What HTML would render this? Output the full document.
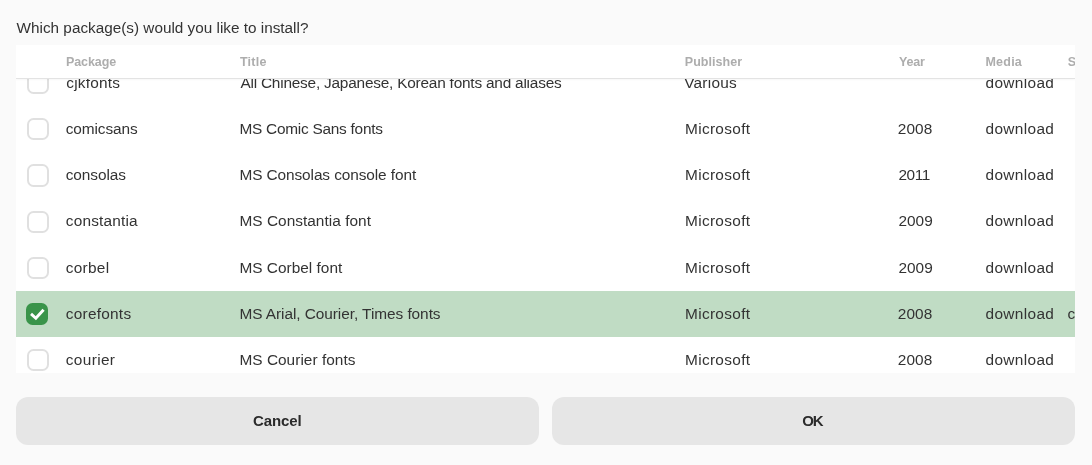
<!DOCTYPE html>
<html><head><meta charset="utf-8">
<style>
html,body{margin:0;padding:0;}
body{width:1092px;height:465px;background:#fafafa;overflow:hidden;font-family:"Liberation Sans",sans-serif;color:#333333;}
#wrap{position:absolute;left:0;top:0;width:1092px;height:465px;background:#fafafa;will-change:transform;}
.t{position:absolute;white-space:pre;line-height:1;}
#list{position:absolute;left:16px;top:45px;width:1059px;height:328px;background:#fff;overflow:hidden;}
#hdr{position:absolute;left:0;top:0;width:100%;height:33px;background:#fff;z-index:2;border-bottom:1px solid #e3e3e3;box-shadow:0 1px 2px rgba(0,0,0,0.035);}
.h{position:absolute;font-size:12.5px;font-weight:700;color:#adadad;white-space:pre;line-height:1;}
.row{position:absolute;left:0;width:100%;height:46.2px;}
.row.sel{background:#c0dcc4;}
.c{position:absolute;white-space:pre;font-size:15.4px;line-height:1;}
.cb{position:absolute;box-sizing:border-box;width:22.1px;height:22.1px;border:2px solid #e0e0e0;border-radius:6.5px;}
.cb.on{background:#3a944a;border-color:#3a944a;}
.btn{position:absolute;top:397px;height:48px;background:#e6e6e6;border-radius:12px;}
.b{position:absolute;font-size:15px;font-weight:700;line-height:1;color:#2b2b2b;white-space:pre;}
</style></head><body><div id="wrap">
<span class="t" style="left:16.60px;top:20.15px;letter-spacing:0.005px;font-size:15.3px">Which package(s) would you like to install?</span>
<div id="list">
<div id="hdr">
<span class="h" style="left:49.95px;top:11.12px;letter-spacing:-0.091px">Package</span>
<span class="h" style="left:223.90px;top:11.12px;letter-spacing:0.246px">Title</span>
<span class="h" style="left:668.75px;top:11.12px;letter-spacing:0.046px">Publisher</span>
<span class="h" style="left:882.99px;top:11.12px;letter-spacing:-0.158px">Year</span>
<span class="h" style="left:969.42px;top:11.12px;letter-spacing:0.246px">Media</span>
<span class="h" style="left:1051.72px;top:11.12px">S</span>
</div>
<div class="row" style="top:15.00px">
<div class="cb" style="left:10.70px;top:12.10px"></div>
<span class="c" style="left:50.28px;top:14.96px;letter-spacing:0.232px">cjkfonts</span>
<span class="c" style="left:224.43px;top:14.96px;letter-spacing:-0.214px">All Chinese, Japanese, Korean fonts and aliases</span>
<span class="c" style="left:668.17px;top:14.96px;letter-spacing:0.265px">Various</span>
<span class="c" style="left:969.51px;top:14.96px;letter-spacing:0.362px">download</span>
</div>
<div class="row" style="top:61.20px">
<div class="cb" style="left:10.70px;top:12.10px"></div>
<span class="c" style="left:49.78px;top:14.76px;letter-spacing:-0.098px">comicsans</span>
<span class="c" style="left:223.42px;top:14.76px;letter-spacing:-0.248px">MS Comic Sans fonts</span>
<span class="c" style="left:669.00px;top:14.76px;letter-spacing:0.325px">Microsoft</span>
<span class="c" style="left:881.80px;top:14.76px;letter-spacing:0.090px">2008</span>
<span class="c" style="left:969.51px;top:14.76px;letter-spacing:0.362px">download</span>
</div>
<div class="row" style="top:107.40px">
<div class="cb" style="left:10.70px;top:12.10px"></div>
<span class="c" style="left:49.78px;top:14.56px;letter-spacing:-0.089px">consolas</span>
<span class="c" style="left:223.42px;top:14.56px;letter-spacing:-0.088px">MS Consolas console font</span>
<span class="c" style="left:669.00px;top:14.56px;letter-spacing:0.325px">Microsoft</span>
<span class="c" style="left:882.40px;top:14.56px;letter-spacing:-0.402px">2011</span>
<span class="c" style="left:969.51px;top:14.56px;letter-spacing:0.362px">download</span>
</div>
<div class="row" style="top:153.60px">
<div class="cb" style="left:10.70px;top:12.10px"></div>
<span class="c" style="left:49.78px;top:14.36px;letter-spacing:0.187px">constantia</span>
<span class="c" style="left:223.42px;top:14.36px;letter-spacing:0.038px">MS Constantia font</span>
<span class="c" style="left:669.00px;top:14.36px;letter-spacing:0.325px">Microsoft</span>
<span class="c" style="left:882.40px;top:14.36px;letter-spacing:0.039px">2009</span>
<span class="c" style="left:969.51px;top:14.36px;letter-spacing:0.362px">download</span>
</div>
<div class="row" style="top:199.80px">
<div class="cb" style="left:10.70px;top:12.10px"></div>
<span class="c" style="left:49.78px;top:15.16px;letter-spacing:0.285px">corbel</span>
<span class="c" style="left:223.42px;top:15.16px;letter-spacing:0.014px">MS Corbel font</span>
<span class="c" style="left:669.00px;top:15.16px;letter-spacing:0.325px">Microsoft</span>
<span class="c" style="left:882.40px;top:15.16px;letter-spacing:0.039px">2009</span>
<span class="c" style="left:969.51px;top:15.16px;letter-spacing:0.362px">download</span>
</div>
<div class="row sel" style="top:246.00px">
<div class="cb on" style="left:10.30px;top:11.8px"><svg width="22.1" height="22.1" viewBox="0 0 22 22" style="position:absolute;left:-2px;top:-2px"><path d="M5.0 10.9 L9.8 15.2 L17.5 6.7" fill="none" stroke="#fff" stroke-width="2.9" stroke-linecap="butt" stroke-linejoin="miter"/></svg></div>
<span class="c" style="left:49.78px;top:14.96px;letter-spacing:0.253px">corefonts</span>
<span class="c" style="left:223.42px;top:14.96px;letter-spacing:-0.054px">MS Arial, Courier, Times fonts</span>
<span class="c" style="left:669.00px;top:14.96px;letter-spacing:0.325px">Microsoft</span>
<span class="c" style="left:881.80px;top:14.96px;letter-spacing:0.090px">2008</span>
<span class="c" style="left:969.51px;top:14.96px;letter-spacing:0.362px">download</span>
<span class="c" style="left:1051.38px;top:14.96px">cached</span>
</div>
<div class="row" style="top:292.20px">
<div class="cb" style="left:10.70px;top:12.10px"></div>
<span class="c" style="left:49.78px;top:14.76px;letter-spacing:0.357px">courier</span>
<span class="c" style="left:223.42px;top:14.76px;letter-spacing:0.036px">MS Courier fonts</span>
<span class="c" style="left:669.00px;top:14.76px;letter-spacing:0.325px">Microsoft</span>
<span class="c" style="left:881.80px;top:14.76px;letter-spacing:0.090px">2008</span>
<span class="c" style="left:969.51px;top:14.76px;letter-spacing:0.362px">download</span>
</div>
</div>
<div class="btn" style="left:16px;width:523px"></div>
<div class="btn" style="left:552px;width:523px"></div>
<span class="b" style="left:253.02px;top:413.10px;letter-spacing:-0.117px">Cancel</span>
<span class="b" style="left:802.22px;top:413.10px;letter-spacing:-1.216px">OK</span>
</div></body></html>
